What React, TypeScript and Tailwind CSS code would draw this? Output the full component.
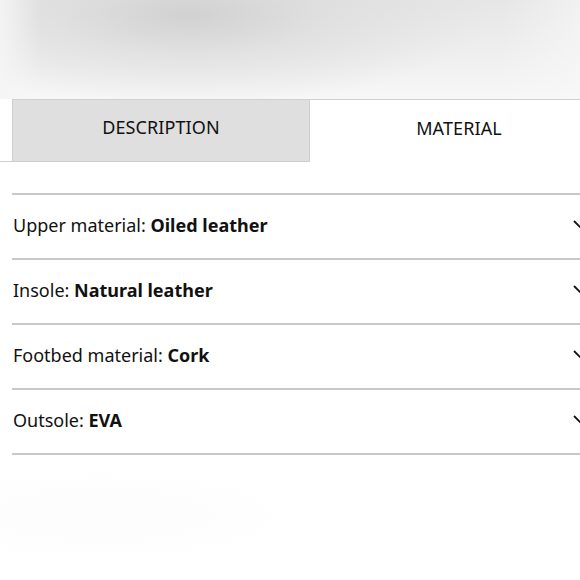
import React from "react";

const rows: { label: string; value: string }[] = [
  { label: "Upper material:", value: "Oiled leather" },
  { label: "Insole:", value: "Natural leather" },
  { label: "Footbed material:", value: "Cork" },
  { label: "Outsole:", value: "EVA" },
];

function Chevron() {
  return (
    <svg width="16" height="10" viewBox="0 0 16 10" fill="none" className="shrink-0">
      <path d="M1 1 L8 8 L15 1" stroke="#111" strokeWidth="1.8" />
    </svg>
  );
}

export default function App() {
  return (
    <div
      className="w-[580px] h-[580px] overflow-hidden bg-white text-[#111]"
      style={{ fontFamily: "'Noto Sans', 'Liberation Sans', sans-serif" }}
    >
      <div className="h-[99px] bg-[linear-gradient(180deg,#e6e6e6_0%,#eeeeee_50%,#f7f7f7_100%)]">
        <div className="h-full w-full bg-[radial-gradient(ellipse_300px_90px_at_190px_15px,rgba(208,208,208,0.95)_0%,rgba(218,218,218,0.6)_45%,rgba(235,235,235,0)_100%)]">
          <div className="h-full w-full bg-[linear-gradient(90deg,rgba(245,245,245,0.9)_0%,rgba(245,245,245,0)_40px,rgba(245,245,245,0)_500px,rgba(248,248,248,0.6)_100%)]" />
        </div>
      </div>
      <div className="relative h-[63px] w-[620px]">
        <div className="absolute left-0 right-0 top-0 border-t border-[#d0d0d0] ml-[12px]" />
        <div className="flex h-full">
          <div className="w-[12px] border-b border-[#cfcfcf]" />
          <div className="w-[298px] flex items-center justify-center pb-[6px] bg-[#dfdfdf] border border-[#cfcfcf] text-[18px] tracking-[0.1px]">
            DESCRIPTION
          </div>
          <div className="w-[298px] flex items-center justify-center pb-[6px] bg-white border-t border-[#d0d0d0] text-[18px] tracking-[0.1px]">
            MATERIAL
          </div>
        </div>
      </div>
      <div className="mt-[31px] ml-[12px] w-[610px] border-t-2 border-[#c8c8c8]">
        {rows.map((r) => (
          <div
            key={r.label}
            className="h-[65px] flex items-center justify-between border-b-2 border-[#c8c8c8] pl-[1px] pr-[33px] pb-[3px] text-[18px]"
          >
            <span>
              {r.label} <b className="font-bold">{r.value}</b>
            </span>
            <Chevron />
          </div>
        ))}
      </div>
      <div className="h-[120px] bg-[radial-gradient(ellipse_220px_50px_at_100px_60px,#fcfcfc_0%,rgba(255,255,255,0)_100%)]" />
    </div>
  );
}
